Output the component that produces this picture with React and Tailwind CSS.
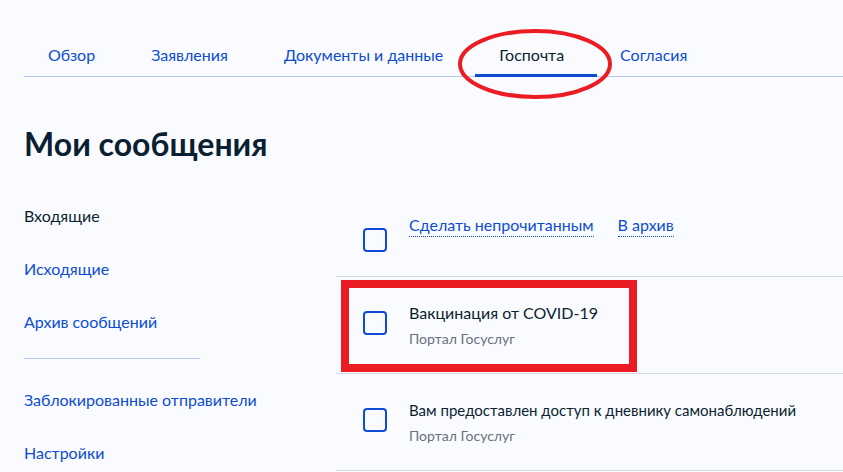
import React from "react";

const tabs = ["Обзор", "Заявления", "Документы и данные", "Госпочта", "Согласия"];

function Box() {
  return <div className="w-6 h-6 rounded-[4px] border-2 border-[#0d4cd3] shrink-0" />;
}

function Row({ title, big, children }) {
  return (
    <div className="relative flex h-[97px] border-b border-[#d4d8e0] pl-[27px]">
      <div className="mt-[34px]"><Box /></div>
      <div className="ml-[22px] mt-[26px]">
        <div className={(big ? "text-[16px]" : "text-[15px]") + " leading-[20px] text-[#0b1f33]"}>{title}</div>
        <div className="mt-[6px] text-[14px] leading-[20px] text-[#66727f]">Портал Госуслуг</div>
      </div>
      {children}
    </div>
  );
}

export default function App() {
  return (
    <div
      className="relative w-[843px] h-[472px] overflow-hidden bg-[#f9fbfe] text-[#0b1f33]"
      style={{ fontFamily: "Lato, 'Noto Sans', sans-serif" }}
    >
      <div className="pl-6">
        <div className="flex h-[77px] border-b border-[#b6c8ef] pt-[45px]">
          {tabs.map((t, i) => {
            const active = i === 3;
            return (
              <div
                key={t}
                className={
                  "relative h-[31px] px-6 text-[16px] leading-[20px] " +
                  (i > 0 ? "ml-2 " : "") +
                  (active ? "text-[#0b1f33]" : "text-[#0d4cd3]")
                }
              >
                {t}
                {active && (
                  <div className="absolute left-0 right-[-9px] bottom-[-1px] h-[3px] bg-[#0d4cd3]" />
                )}
              </div>
            );
          })}
        </div>

        <h1 className="mt-[47px] text-[32px] leading-[40px] font-bold text-[#0b1f33]">Мои сообщения</h1>
      </div>

      <div className="flex mt-[26px]">
        <div className="w-[336px] shrink-0 pl-6 text-[16px] leading-[20px]">
          <div className="mt-[16px] text-[#0b1f33]">Входящие</div>
          <div className="mt-[33px] text-[#0d4cd3]">Исходящие</div>
          <div className="mt-[33px] text-[#0d4cd3]">Архив сообщений</div>
          <div className="mt-[26px] w-[176px] h-px bg-[#b6c8ef]" />
          <div className="mt-[31px] text-[#0d4cd3]">Заблокированные отправители</div>
          <div className="mt-[33px] text-[#0d4cd3]">Настройки</div>
        </div>

        <div className="flex-1">
          <div className="flex items-start h-[87px] border-b border-[#d4d8e0] pl-[27px]">
            <div className="mt-[38px]"><Box /></div>
            <div className="ml-[22px] mt-[25px] flex items-start gap-6 text-[16px] leading-[20px] text-[#0d4cd3]">
              <span className="pb-[1px] border-b border-dotted border-[#0d4cd3]">Сделать непрочитанным</span>
              <span className="pb-[1px] border-b border-dotted border-[#0d4cd3]">В архив</span>
            </div>
          </div>
          <Row title="Вакцинация от COVID-19" big>
            <div className="absolute left-[5px] top-[3px] w-[296px] h-[92px] border-[8px] border-[#ec1c24]" />
          </Row>
          <Row title="Вам предоставлен доступ к дневнику самонаблюдений" />
        </div>
      </div>

      <svg className="absolute left-[456px] top-[27px]" width="158" height="74" viewBox="0 0 158 74">
        <ellipse cx="79" cy="37" rx="75" ry="33" fill="none" stroke="#ec1c24" strokeWidth="4" />
      </svg>
    </div>
  );
}
